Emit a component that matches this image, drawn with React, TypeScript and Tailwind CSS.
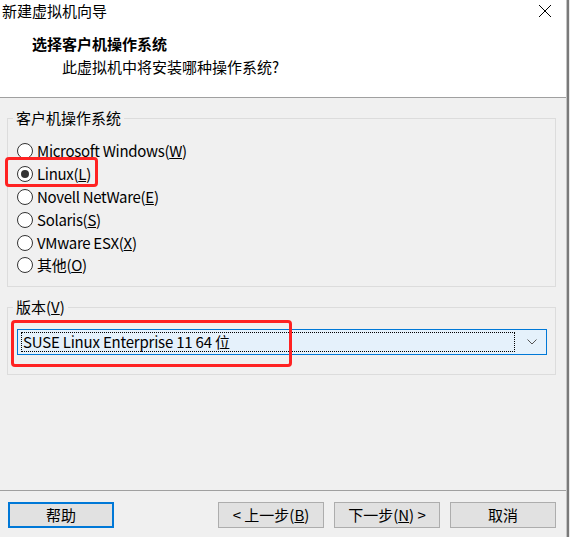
import React from "react";

/* -------------------- DATA -------------------- */

const OS_OPTIONS = [
  { label: "Microsoft Windows", key: "W" },
  { label: "Linux", key: "L", checked: true },
  { label: "Novell NetWare", key: "E" },
  { label: "Solaris", key: "S" },
  { label: "VMware ESX", key: "X" },
  { label: "其他", key: "O" },
];

const FONT = { fontFamily: '"Noto Sans CJK SC", "Noto Sans", sans-serif' };

/* -------------------- PARTS -------------------- */

const Mnemonic = ({ k }: { k: string }) => (
  <>
    (<span className="underline underline-offset-[1px]">{k}</span>)
  </>
);

const Radio = ({ checked }: { checked?: boolean }) => (
  <span className="flex h-[16px] w-[16px] shrink-0 items-center justify-center rounded-full border border-[#333] bg-white">
    {checked && <span className="h-[8px] w-[8px] rounded-full bg-[#333]" />}
  </span>
);

const Button = ({
  children,
  primary,
}: {
  children: React.ReactNode;
  primary?: boolean;
}) => (
  <button
    className={
      primary
        ? "flex h-[26px] w-[106px] items-center justify-center border-2 border-[#0078d7] bg-[#e1e1e1] text-[15px] leading-[20px] text-black"
        : "flex h-[26px] w-[106px] items-center justify-center border border-[#adadad] bg-[#e1e1e1] text-[15px] leading-[20px] text-black"
    }
  >
    {children}
  </button>
);

/* -------------------- APP -------------------- */

export default function App() {
  return (
    <div className="flex h-[537px] w-[570px] bg-[#f0f0f0] text-black" style={FONT}>
      <div className="flex w-[566px] flex-col">
        {/* Header */}
        <div className="h-[98px] border-b border-[#a0a0a0] bg-white">
          <div className="flex h-[22px] items-center justify-between pl-[2px] pr-[14px]">
            <span className="text-[15px] leading-[22px]">新建虚拟机向导</span>
            <svg width="14" height="14" viewBox="0 0 14 14" className="mt-[-1px]">
              <path d="M1 1 L13 13 M13 1 L1 13" stroke="#000" strokeWidth="1" fill="none" />
            </svg>
          </div>
          <div className="mt-[12px] pl-[32px] text-[15px] font-bold leading-[20px]">
            选择客户机操作系统
          </div>
          <div className="mt-[3px] pl-[62px] text-[15px] leading-[20px]">
            此虚拟机中将安装哪种操作系统?
          </div>
        </div>

        {/* Body */}
        <div className="flex flex-1 flex-col px-[7px] pr-[10px]">
          {/* Guest OS group */}
          <div className="relative mt-[20px] border border-[#dcdcdc] pb-[9px] pt-[21px]">
            <span className="absolute left-[5px] top-[-11px] bg-[#f0f0f0] px-[3px] text-[15px] leading-[20px]">
              客户机操作系统
            </span>
            {OS_OPTIONS.map((o) => (
              <div key={o.key} className="relative flex h-[22.8px] items-center gap-[4px] pl-[9px]">
                <Radio checked={o.checked} />
                <span className="text-[15px] leading-[20px] tracking-[-0.3px]">
                  {o.label}
                  <Mnemonic k={o.key} />
                </span>
                {o.checked && (
                  <span className="absolute left-[-3px] top-[-6px] h-[30px] w-[93px] rounded-[4px] border-[3px] border-[#ff2222]" />
                )}
              </div>
            ))}
          </div>

          {/* Version group */}
          <div className="relative mt-[20px] border border-[#dcdcdc] pb-[19px] pl-[9px] pr-[8px] pt-[21px]">
            <span className="absolute left-[5px] top-[-11px] bg-[#f0f0f0] px-[3px] text-[15px] leading-[20px]">
              版本<Mnemonic k="V" />
            </span>
            <div className="relative flex h-[26px] items-center border border-[#0078d7] bg-[#e5f1fb] pl-[3px] pr-[9px]">
              <div className="flex h-[20px] flex-1 items-center border border-dotted border-black pl-[1px] text-[15px] leading-[20px] tracking-[-0.2px]">
                SUSE Linux Enterprise 11 64 位
              </div>
              <svg width="10" height="6" viewBox="0 0 10 6" className="ml-[12px]">
                <path d="M0.5 0.5 L5 5 L9.5 0.5" stroke="#555" strokeWidth="1" fill="none" />
              </svg>
              <span className="absolute left-[-7px] top-[-10px] h-[47px] w-[281px] rounded-[4px] border-[3px] border-[#ff2222]" />
            </div>
          </div>

          <div className="flex-1" />
        </div>

        {/* Footer */}
        <div className="flex items-center border-t border-[#a0a0a0] pb-[9px] pl-[8px] pr-[10px] pt-[11px]">
          <Button primary>帮助</Button>
          <div className="ml-auto flex gap-[10px]">
            <Button>
              &lt; 上一步<Mnemonic k="B" />
            </Button>
            <Button>
              下一步<Mnemonic k="N" /> &gt;
            </Button>
            <Button>取消</Button>
          </div>
        </div>
      </div>
      <div className="w-[1px] bg-[#c4c4c4]" />
      <div className="w-[2px] bg-[#7a7a7a]" />
      <div className="w-[1px] bg-[#e8e8e8]" />
    </div>
  );
}
